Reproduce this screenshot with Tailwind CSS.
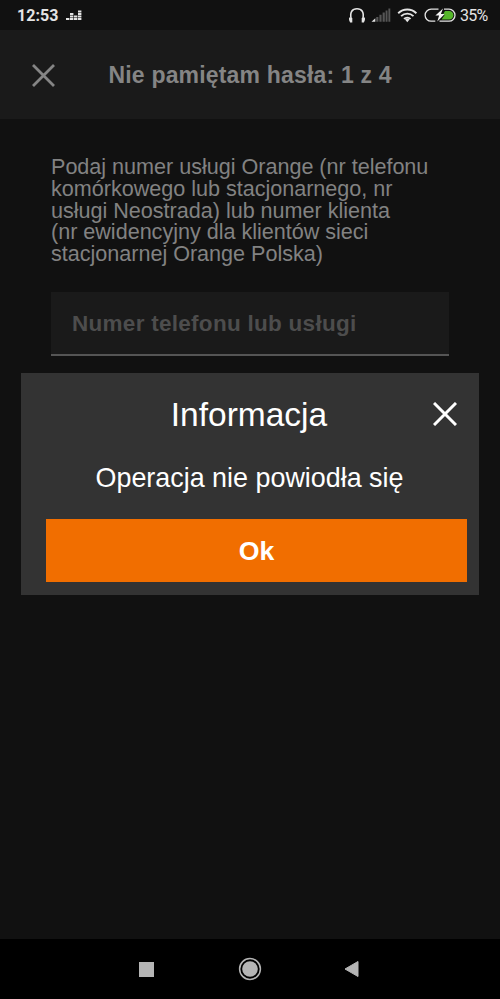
<!DOCTYPE html>
<html lang="pl">
<head>
<meta charset="utf-8">
<title>Nie pamiętam hasła</title>
<script src="https://cdn.jsdelivr.net/npm/@tailwindcss/browser@4"></script>
</head>
<body class="bg-[#111111]">
<div class="relative flex h-[999px] w-[500px] flex-col overflow-hidden bg-[#111111] font-['Liberation_Sans',Arial,sans-serif]">
  <div class="flex h-[30px] shrink-0 items-center justify-between pl-[17px] font-[Roboto,sans-serif] text-[#e4e4e4]">
    <div class="flex items-center">
      <span class="w-[49px] pt-[2px] text-[16px] leading-none font-bold tracking-[0.05px]">12:53</span>
      <svg class="h-[30px] w-[16px]" viewBox="66 0 16 30" fill="#e4e4e4">
        <path d="M66 18h3.4v2H66zM70 18h3.4v2H70zM74 18h3.4v2H74zM78 18h3.4v2H78zM70 15.5h3.4v1.9H70zM74 15.5h3.4v1.9H74zM78 15.5h3.4v1.9H78zM70 13h3.4v1.9H70zM78 13h3.4v1.9H78zM78 10.5h3.4v1.9H78z"/>
      </svg>
    </div>
    <div class="flex items-center">
      <svg class="h-[30px] w-[115px]" viewBox="345 0 115 30" fill="none">
        <path d="M351.2 19C349.6 12 352.3 8.8 357 8.8s7.4 3.2 5.8 10.2" stroke="#e4e4e4" stroke-width="1.6"/>
        <path d="M349 17.5l3.3.6v4.4h-2.2q-1.5-2-1.1-5zM365 17.5l-3.3.6v4.4h2.2q1.5-2 1.1-5z" fill="#e4e4e4"/>
        <path d="M371.5 21.8l3.8-3.6v3.6z" fill="#e4e4e4"/>
        <path d="M376.2 17h2.2v4.8h-2.2zM379.4 14.8h2.2v7h-2.2zM382.6 12.5h2.2v9.3h-2.2zM385.6 10.4h1.9v11.4h-1.9zM388.4 8.6h1.9v13.2h-1.9z" fill="#565656"/>
        <path d="M398.2 13.2a13.2 13.2 0 0 1 18.2 0M401.1 16.1a9 9 0 0 1 12.4 0M404 18.9a4.9 4.9 0 0 1 6.6 0" stroke="#e4e4e4" stroke-width="1.9"/>
        <path d="M405 19.4q2.3-1.6 4.6 0l-2.3 2.8z" fill="#e4e4e4"/>
        <path d="M438.5 9.2h-7.4a6 6 0 0 0 0 12h4.2M444 9.2h5a6 6 0 0 1 0 12h-9.5" stroke="#e4e4e4" stroke-width="1.3"/>
        <path d="M445 11h4.2a4.2 4.2 0 0 1 0 8.4h-7.7l3.5-4.9h-2z" fill="#56b72b"/>
        <path d="M443 8.6l-7.6 7h3.7l-1.8 5.8 7.4-7.5h-3.8z" fill="#f4f4f4"/>
      </svg>
      <span class="w-10 pt-px text-[16px] leading-none tracking-[-0.7px]">35%</span>
    </div>
  </div>

  <header class="flex h-[89px] shrink-0 items-center bg-[#1a1a1a] pt-px pl-8 text-[#858585]">
    <svg class="h-[23px] w-[23px]" viewBox="0 0 23 23" stroke="currentColor" stroke-width="2.8"><path d="M1 1l21 21M22 1L1 22"/></svg>
    <h1 class="ml-[53.5px] pt-px text-[23px] leading-none font-bold tracking-[0.18px] whitespace-nowrap">Nie pamiętam hasła: 1 z 4</h1>
  </header>

  <main class="flex grow flex-col px-[51px] pt-[37px]">
    <p class="-mr-5 h-[108px] text-[21.6px] leading-[21.75px] tracking-[-0.02px] whitespace-nowrap text-[#828282]">Podaj numer usługi Orange (nr telefonu<br>komórkowego lub stacjonarnego, nr<br>usługi Neostrada) lub numer klienta<br>(nr ewidencyjny dla klientów sieci<br>stacjonarnej Orange Polska)</p>
    <div class="mt-7 flex h-[64px] items-center border-b-2 border-[#555555] bg-[#1a1a1a] pt-px pl-[21px] text-[22.5px] font-bold tracking-[0.28px] text-[#4d4d4d]">Numer telefonu lub usługi</div>
  </main>

  <nav class="flex h-[60px] shrink-0 items-center bg-black pl-[139px]">
    <div class="h-[15px] w-[15px] bg-[#b5b5b5]"></div>
    <svg class="ml-[84px] h-6 w-6" viewBox="0 0 24 24"><circle cx="12" cy="12" r="10.4" fill="none" stroke="#b5b5b5" stroke-width="1.5"/><circle cx="12" cy="12" r="7.8" fill="#b5b5b5"/></svg>
    <svg class="ml-[82px] h-[18px] w-[15px]" viewBox="0 0 15 18"><path d="M1 9L14 1.5v15z" fill="#b5b5b5" stroke="#b5b5b5" stroke-linejoin="round"/></svg>
  </nav>

  <section class="absolute top-[373px] left-[21px] flex h-[222px] w-[458px] flex-col bg-[#333333] text-white">
    <div class="flex h-[82px] items-center justify-center pl-[44px]">
      <h2 class="grow pt-[2px] text-center text-[33.5px] leading-none">Informacja</h2>
      <svg class="mr-[22px] h-[24px] w-[24px]" viewBox="0 0 24 24" stroke="currentColor" stroke-width="3"><path d="M1 1l22 22M23 1L1 23"/></svg>
    </div>
    <p class="flex h-[64px] items-center justify-center pr-px pb-[18px] text-[26.9px] leading-none">Operacja nie powiodła się</p>
    <div class="mr-3 ml-[25px] flex h-[63px] items-center justify-center bg-[#f16e00] pt-[2px] text-[26.7px] leading-none font-bold">Ok</div>
  </section>
</div>
</body>
</html>
